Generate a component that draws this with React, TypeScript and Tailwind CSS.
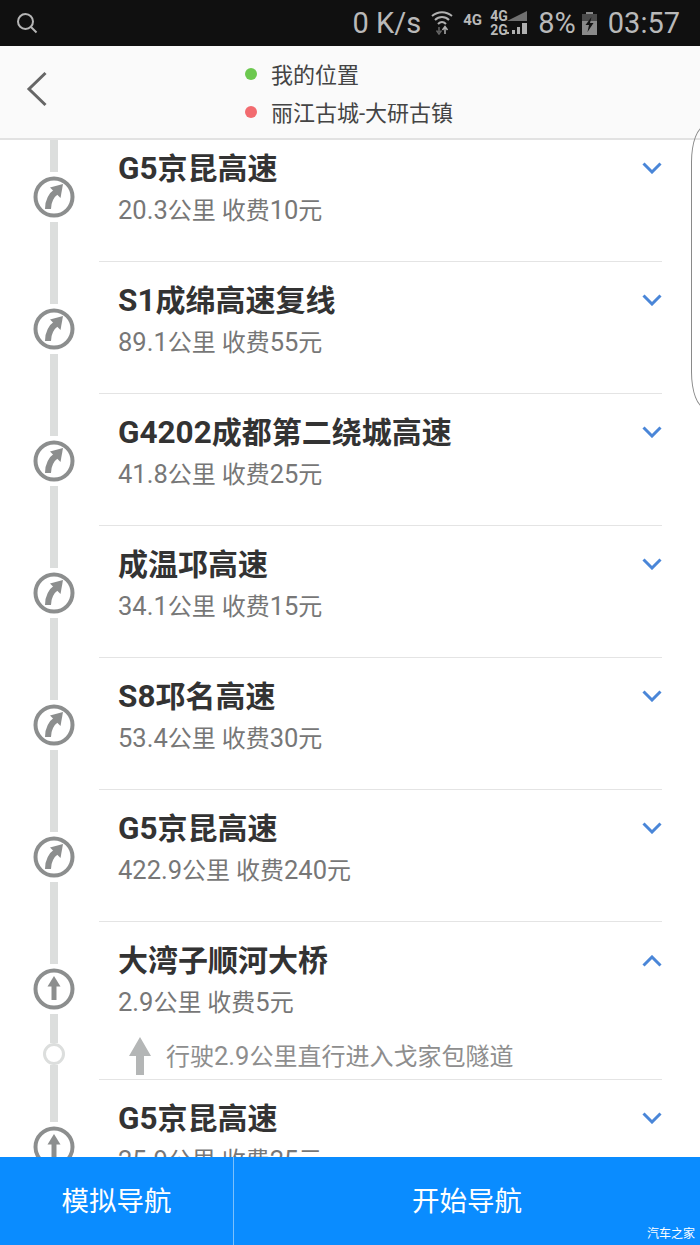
const cjk = "font-['Roboto','Noto_Sans_CJK_SC',sans-serif]";

const routes = [
  { title: 'G5京昆高速', info: '20.3公里 收费10元', turn: true },
  { title: 'S1成绵高速复线', info: '89.1公里 收费55元', turn: true },
  { title: 'G4202成都第二绕城高速', info: '41.8公里 收费25元', turn: true },
  { title: '成温邛高速', info: '34.1公里 收费15元', turn: true },
  { title: 'S8邛名高速', info: '53.4公里 收费30元', turn: true },
  { title: 'G5京昆高速', info: '422.9公里 收费240元', turn: true },
  { title: '大湾子顺河大桥', info: '2.9公里 收费5元', turn: false, open: true },
  { title: 'G5京昆高速', info: '25.9公里 收费25元', turn: false },
];

// latin runs sit a touch larger than the CJK glyphs in the original
function Mixed({ text, latin }: { text: string; latin: string }) {
  const parts = text.split(/([\x21-\x7e]+)/);
  return (
    <>
      {parts.map((p, i) =>
        i % 2 === 1 ? (
          <span key={i} className={latin}>
            {p}
          </span>
        ) : (
          p
        )
      )}
    </>
  );
}

function TurnIcon({ turn }: { turn: boolean }) {
  return (
    <svg width="42" height="42" viewBox="0 0 42 42" className="shrink-0">
      <circle cx="21" cy="21" r="18.500" fill="#fff" stroke="#8c8e8e" strokeWidth="4" />
      {turn ? (
        <>
          <path d="M15 33 C15 26 17 20 24 15" fill="none" stroke="#8c8e8e" strokeWidth="6" />
          <path d="M17 11.500 L30 8 L27.500 22 Z" fill="#8c8e8e" />
        </>
      ) : (
        <>
          <path d="M21 17 V32" fill="none" stroke="#8c8e8e" strokeWidth="5" />
          <path d="M14.500 18.500 L21 8 L27.500 18.500 Z" fill="#8c8e8e" />
        </>
      )}
    </svg>
  );
}

function Chevron({ up }: { up?: boolean }) {
  return (
    <svg width="20" height="12" viewBox="0 0 20 12" fill="none" stroke="#4a86d8" strokeWidth="3">
      <path d={up ? 'M1.500 10.500 L10 2 L18.500 10.500' : 'M1.500 1.500 L10 10 L18.500 1.500'} />
    </svg>
  );
}

function Row({ route }: { route: (typeof routes)[number] }) {
  return (
    <div className="flex">
      <div className="w-[99px] shrink-0 flex flex-col items-center pl-[9px]">
        <div className="h-[42px] w-2 bg-[#dcdedd]" />
        <div className="my-1 h-[42px] flex">
          <TurnIcon turn={route.turn} />
        </div>
        {route.open && (
          <>
            <div className="h-[29px] w-2 bg-[#dcdedd]" />
            <div className="h-[22px] w-[22px] shrink-0 rounded-full border-[3px] border-[#dcdedd] bg-white" />
          </>
        )}
        <div className="flex-1 w-2 bg-[#dcdedd]" />
      </div>
      <div className="flex-1 mr-[38px] border-b border-[#e4e4e4] pl-[19px] relative">
        <div className="h-[131px] pt-[17px]">
          <div className="text-[30px] leading-[44px] font-bold text-[#333333] whitespace-nowrap">
            <Mixed text={route.title} latin="text-[31.500px]" />
          </div>
          <div className="text-[24px] leading-[36px] mt-[1px] text-[#777777] whitespace-nowrap">
            <Mixed text={route.info} latin="text-[25.500px]" />
          </div>
        </div>
        <div className={`absolute right-0 flex ${route.open ? 'top-[33px]' : 'top-[32px]'}`}>
          <Chevron up={route.open} />
        </div>
        {route.open && (
          <div className="flex items-center h-[26px] mb-[10px] -mt-[10px] pl-[10px]">
            <svg width="24" height="40" viewBox="0 0 24 40" className="shrink-0">
              <path d="M12 1 L23 20 H16 V39 H8 V20 H1 Z" fill="#b4b6b6" />
            </svg>
            <span className="ml-[14px] text-[24px] leading-[36px] text-[#8e8e8e] whitespace-nowrap">
              <Mixed text="行驶2.9公里直行进入戈家包隧道" latin="text-[25.500px]" />
            </span>
          </div>
        )}
      </div>
    </div>
  );
}

export default function App() {
  return (
    <div className={`relative h-[1245px] w-[700px] flex flex-col overflow-hidden bg-white ${cjk}`}>
      {/* status bar */}
      <div className="h-[46px] shrink-0 bg-[#101010] flex items-center justify-between pl-4 pr-[20px] text-[#b9b9b9]">
        <svg width="22" height="22" viewBox="0 0 22 22" fill="none" stroke="#b5b5b5" strokeWidth="2">
          <circle cx="9.500" cy="9.500" r="7.500" />
          <path d="M15 15 L20.500 20.500" />
        </svg>
        <div className="flex items-center text-[29px] leading-[46px]">
          <span>0 K/s</span>
          <svg width="22" height="24" viewBox="0 0 22 24" className="ml-[10px]" fill="none" stroke="#b0b0b0" strokeWidth="2">
            <path d="M1 5 C7 0 15 0 21 5" />
            <path d="M4 9 C8 5 14 5 18 9" />
            <path d="M7 13 C9.500 10.500 12.500 10.500 15 13" />
            <path d="M8 16 V21 M5.500 19.500 L8 23 L10.500 19.500" stroke="#666" strokeWidth="1.500" />
            <path d="M14 23 V17 M11.500 19 L14 15.500 L16.500 19" strokeWidth="1.500" />
          </svg>
          <span className="ml-[10px] w-[19px] text-[15px] leading-none font-bold -mt-[6px]">4G</span>
          <div className="relative ml-[8px] w-[38px] h-[24px]">
            <span className="absolute left-0 top-[-1px] text-[14px] leading-[12px] font-bold">4G</span>
            <span className="absolute left-0 top-[13px] text-[14px] leading-[12px] font-bold">2G</span>
            <svg width="38" height="24" viewBox="0 0 38 24" className="absolute inset-0">
              <path d="M17 10 L37 0 V10 Z" fill="#707070" />
              <path d="M17 23 h2 v-2 h-2 Z M22 23 h3 v-4 h-3 Z M27 23 h3 v-7 h-3 Z M32 23 h5 v-11 h-5 Z" fill="#b0b0b0" />
            </svg>
          </div>
          <span className="ml-[10px]">8%</span>
          <svg width="15" height="23" viewBox="0 0 15 23" className="ml-[6px]">
            <path d="M4 0 H11 V2 H15 V23 H0 V2 H4 Z" fill="#8a8a8a" />
            <path d="M0 2 H15 V9 H0 Z" fill="#4a4a4a" />
            <path d="M9.500 5 L3.500 13 H7 L5.500 20 L11.500 11 H8 Z" fill="#141414" />
          </svg>
          <span className="ml-[11px]">03:57</span>
        </div>
      </div>

      {/* header */}
      <div className="h-[94px] shrink-0 z-10 bg-[#fafafa] border-b-2 border-[#e2e2e2] flex">
        <div className="w-[245px] flex items-center pl-[26px] pb-[7px]">
          <svg width="22" height="36" viewBox="0 0 22 36" fill="none" stroke="#666666" strokeWidth="3">
            <path d="M19.500 2 L3 18 L19.500 34" />
          </svg>
        </div>
        <div className="flex flex-col pt-[11px] text-[22px] leading-[38px] text-[#444444]">
          <div className="flex items-center">
            <span className="h-3 w-3 mb-[4px] rounded-full bg-[#6cc84f]" />
            <span className="ml-[14px]">我的位置</span>
          </div>
          <div className="flex items-center">
            <span className="h-3 w-3 mb-[4px] rounded-full bg-[#f26b6f]" />
            <span className="ml-[14px]">丽江古城-大研古镇</span>
          </div>
        </div>
      </div>

      {/* route list */}
      <div className="flex-1 overflow-hidden min-h-0">
        <div className="-mt-[10px]">
          {routes.map((route, i) => (
            <Row key={i} route={route} />
          ))}
        </div>
      </div>

      {/* bottom actions */}
      <div className="h-[88px] shrink-0 bg-[#0a8cff] flex text-white text-[27.500px] relative z-10">
        <div className="w-[234px] pt-[2px] flex items-center justify-center border-r border-[#7cc0fb]">模拟导航</div>
        <div className="flex-1 pt-[2px] flex items-center justify-center">开始导航</div>
        <span className="absolute right-[5px] bottom-[4px] text-[12px] leading-[14px]">汽车之家</span>
      </div>

      {/* side handle overlay */}
      <div className="absolute z-20 left-[691px] top-[126px] h-[282px] w-5 rounded-l-[14px] rounded-tl-[14px_36px] rounded-bl-[14px_36px] border border-[#8a8a8a]" />
    </div>
  );
}
